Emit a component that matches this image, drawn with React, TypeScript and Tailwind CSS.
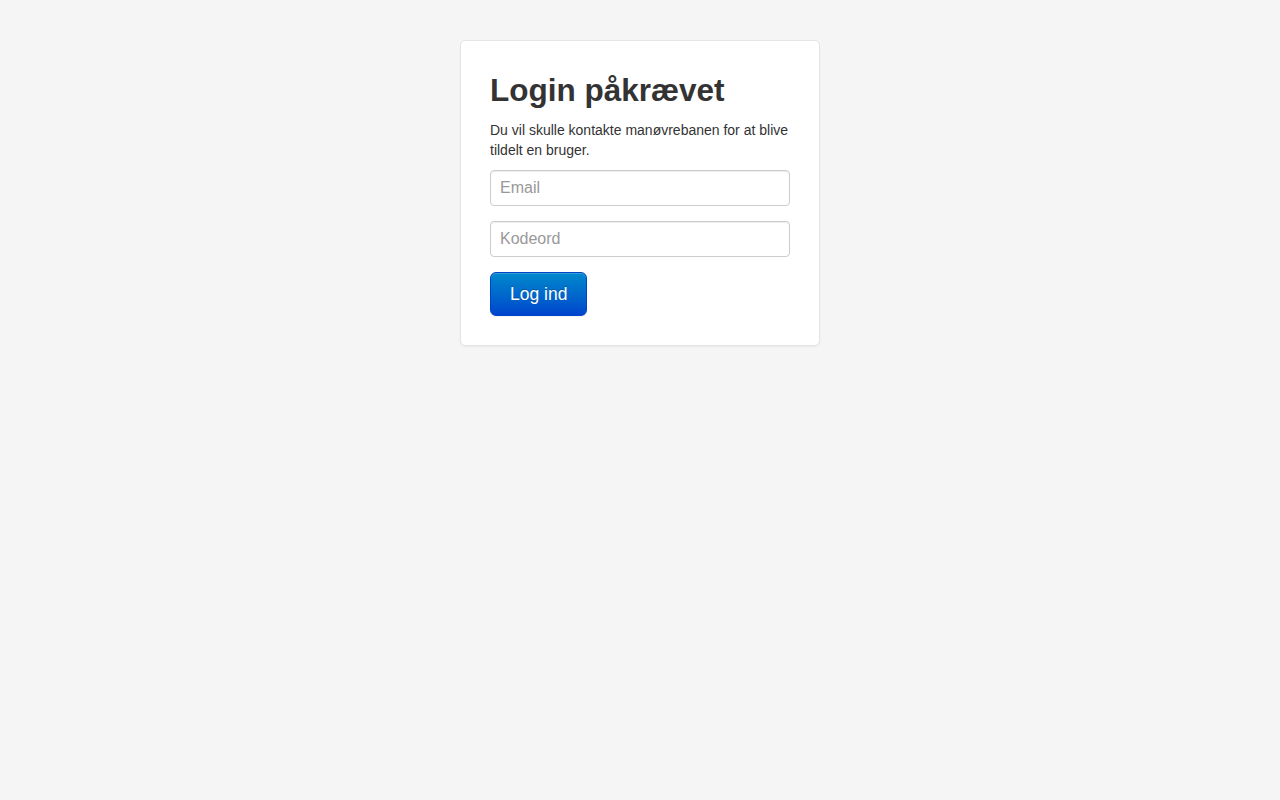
export default function App() {
  return (
    <div className="min-h-screen bg-[#f5f5f5] pt-[40px] font-['Liberation_Sans',Arial,sans-serif] text-[14px] leading-[20px] text-[#333]">
      <form
        className="mx-auto mb-[20px] w-[360px] rounded-[5px] border border-[#e5e5e5] bg-white px-[29px] pt-[19px] pb-[29px] shadow-[0_1px_2px_rgba(0,0,0,0.05)]"
        onSubmit={(e) => e.preventDefault()}
      >
        <h2 className="my-[10px] text-[31.5px] font-bold leading-[40px] text-[#333]">Login påkrævet</h2>
        <p className="mb-[10px]">Du vil skulle kontakte manøvrebanen for at blive tildelt en bruger.</p>
        <input
          type="text"
          placeholder="Email"
          className="mb-[15px] block h-[36px] w-full rounded-[4px] border border-[#ccc] px-[9px] py-[7px] text-[16px] leading-[20px] text-[#555] shadow-[inset_0_1px_1px_rgba(0,0,0,0.075)] outline-none placeholder:text-[#999]"
        />
        <input
          type="password"
          placeholder="Kodeord"
          className="mb-[15px] block h-[36px] w-full rounded-[4px] border border-[#ccc] px-[9px] py-[7px] text-[16px] leading-[20px] text-[#555] shadow-[inset_0_1px_1px_rgba(0,0,0,0.075)] outline-none placeholder:text-[#999]"
        />
        <button
          type="submit"
          className="block rounded-[6px] border border-[#0044cc] bg-gradient-to-b from-[#0088cc] to-[#0044cc] px-[19px] py-[11px] text-[17.5px] leading-[20px] text-white shadow-[inset_0_1px_0_rgba(255,255,255,0.2),0_1px_2px_rgba(0,0,0,0.05)] [text-shadow:0_-1px_0_rgba(0,0,0,0.25)]"
        >
          Log ind
        </button>
      </form>
    </div>
  );
}
